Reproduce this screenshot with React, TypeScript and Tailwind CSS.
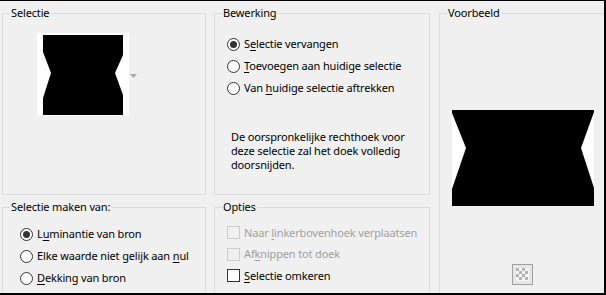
import React from 'react';

const font = { fontFamily: '"Noto Sans", "Open Sans", sans-serif' };

const Radio: React.FC<{ checked?: boolean; children: React.ReactNode }> = ({ checked, children }) => (
  <div className="flex items-center h-[22px] gap-[4px]">
    <span className="w-[13px] h-[13px] rounded-full border border-[#333333] bg-white flex items-center justify-center shrink-0">
      {checked && <span className="w-[7px] h-[7px] rounded-full bg-[#333333]" />}
    </span>
    <span className="text-[11px] tracking-[-0.15px] leading-[14px] text-black whitespace-nowrap">{children}</span>
  </div>
);

const Check: React.FC<{ disabled?: boolean; children: React.ReactNode }> = ({ disabled, children }) => (
  <div className="flex items-center h-[21.5px] gap-[4px]">
    <span
      className={
        disabled
          ? 'w-[13px] h-[13px] border border-[#cccccc] bg-[#f0f0f0] shrink-0'
          : 'w-[13px] h-[13px] border border-[#333333] bg-white shrink-0'
      }
    />
    <span
      className={
        disabled
          ? 'text-[11px] tracking-[-0.15px] leading-[14px] text-[#a0a0a0] whitespace-nowrap'
          : 'text-[11px] tracking-[-0.15px] leading-[14px] text-black whitespace-nowrap'
      }
    >
      {children}
    </span>
  </div>
);

const Group: React.FC<{ title: string; className?: string; children?: React.ReactNode }> = ({ title, className, children }) => (
  <fieldset className={'border border-[#dcdcdc] p-0 m-0 min-w-0 shrink-0 ' + (className ?? '')}>
    <legend className="ml-[7px] px-[1px] text-[11px] tracking-[-0.15px] leading-[14px] text-black">{title}</legend>
    {children}
  </fieldset>
);

const Shape: React.FC<{ w: number; h: number; pts: string }> = ({ w, h, pts }) => (
  <svg width={w} height={h} viewBox={`0 0 ${w} ${h}`} className="block">
    <rect width={w} height={h} fill="#ffffff" />
    <polygon points={pts} fill="#000000" />
  </svg>
);

export default function App() {
  return (
    <div style={font} className="w-[606px] h-[295px] overflow-hidden bg-[#f0f0f0] border-t border-r-2 border-b-2 border-black">
      <div className="flex pl-[2px] pt-[5px]">
        <div className="flex flex-col w-[204px] shrink-0">
          <Group title="Selectie" className="h-[189px]">
            <div className="flex items-center mt-[13px] ml-[34px]">
              <div className="w-[92px] h-[83px] bg-white pt-[2px] pl-[6px]">
                <Shape w={80} h={80} pts="0,0 80,0 80,20 72,38 80,60 80,80 0,80 0,63 8,38 0,17" />
              </div>
              <svg width="7" height="4" viewBox="0 0 7 4" className="ml-[1px] mt-[2px]">
                <polygon points="0,0 7,0 3.5,4" fill="#a8a8a8" />
              </svg>
            </div>
          </Group>
          <Group title="Selectie maken van:" className="mt-[5px] h-[130px]">
            <div className="mt-[9px] ml-[17px] flex flex-col">
              <Radio checked>
                L<u className="underline-offset-2">u</u>minantie van bron
              </Radio>
              <Radio>
                Elke waarde niet gelijk aan <u className="underline-offset-2">n</u>ul
              </Radio>
              <Radio>
                <u className="underline-offset-2">D</u>ekking van bron
              </Radio>
            </div>
          </Group>
        </div>

        <div className="flex flex-col w-[216px] ml-[8px] shrink-0">
          <Group title="Bewerking" className="h-[189px]">
            <div className="mt-[13px] ml-[12px] flex flex-col">
              <Radio checked>
                S<u className="underline-offset-2">e</u>lectie vervangen
              </Radio>
              <Radio>
                <u className="underline-offset-2">T</u>oevoegen aan huidige selectie
              </Radio>
              <Radio>
                Van <u className="underline-offset-2">h</u>uidige selectie aftrekken
              </Radio>
            </div>
            <p className="mt-[31px] ml-[16px] text-[11px] tracking-[-0.15px] leading-[14px] text-black">
              De oorspronkelijke rechthoek voor
              <br />
              deze selectie zal het doek volledig
              <br />
              doorsnijden.
            </p>
          </Group>
          <Group title="Opties" className="mt-[5px] h-[130px]">
            <div className="mt-[8px] ml-[12px] flex flex-col">
              <Check disabled>
                Naar <u className="underline-offset-2">l</u>inkerbovenhoek verplaatsen
              </Check>
              <Check disabled>
                Af<u className="underline-offset-2">k</u>nippen tot doek
              </Check>
              <Check>
                <u className="underline-offset-2">S</u>electie omkeren
              </Check>
            </div>
          </Group>
        </div>

        <Group title="Voorbeeld" className="ml-[9px] w-[167px] h-[330px]">
          <div className="mt-[90px] ml-[12px]">
            <Shape w={142} h={96} pts="0,0 142,0 142,2 129,38 142,78 142,96 0,96 0,79 14,38 0,3" />
          </div>
          <div className="mt-[58px] ml-[72px] w-[21px] h-[21px] border border-[#a0a0a0] bg-[#e6e6e6] p-[3px]">
            <svg width="13" height="13" viewBox="0 0 13 13" className="block">
              <rect width="13" height="13" fill="#f4f4f4" />
              <rect x="0" y="0" width="3" height="3" fill="#b4b4b4" />
              <rect x="6" y="0" width="3" height="3" fill="#b4b4b4" />
              <rect x="3" y="3" width="3" height="3" fill="#b4b4b4" />
              <rect x="9" y="3" width="3" height="3" fill="#b4b4b4" />
              <rect x="0" y="6" width="3" height="3" fill="#b4b4b4" />
              <rect x="6" y="6" width="3" height="3" fill="#b4b4b4" />
              <rect x="3" y="9" width="3" height="3" fill="#b4b4b4" />
              <rect x="9" y="9" width="3" height="3" fill="#b4b4b4" />
            </svg>
          </div>
        </Group>
      </div>
    </div>
  );
}
